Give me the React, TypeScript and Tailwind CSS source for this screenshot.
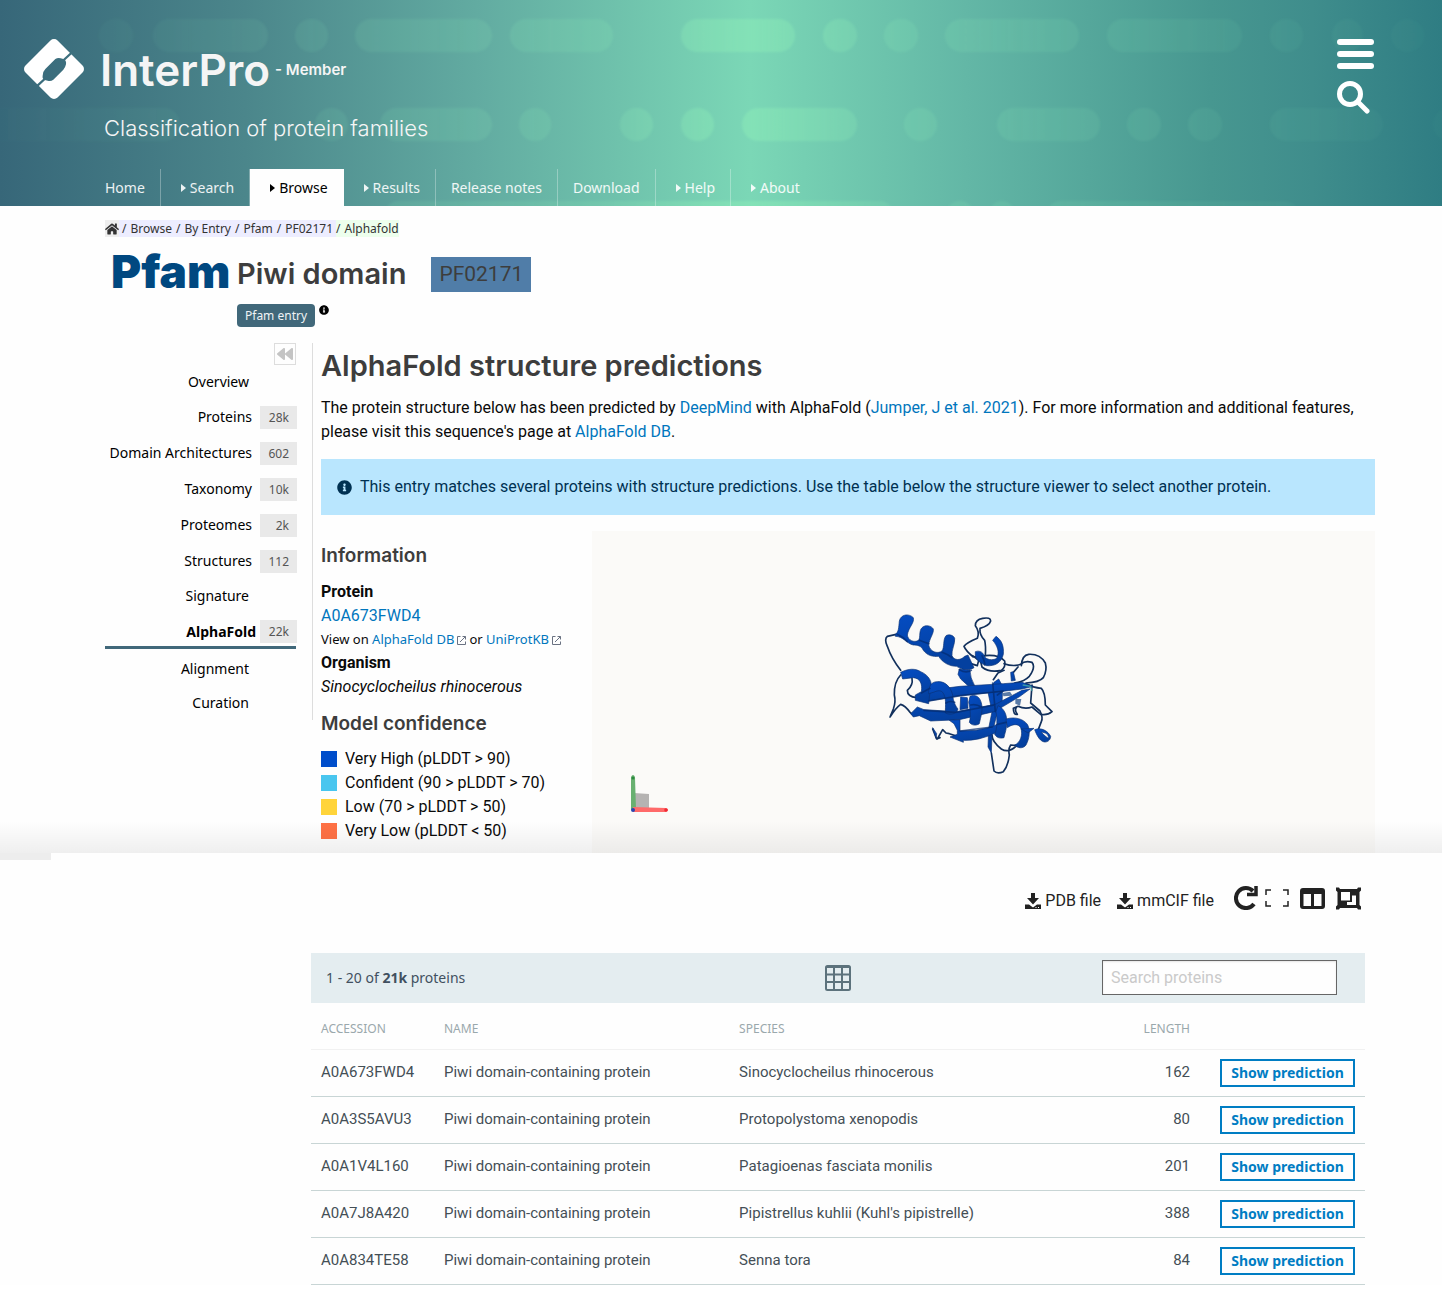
import React from 'react';
import { FaHome, FaInfoCircle, FaBackward } from 'react-icons/fa';

const PLEX = "font-['Roboto',sans-serif]";
const SMALL = "font-['Noto_Sans',sans-serif]";
const HEAD = "font-['Inter',sans-serif]";

const pills: [number, number, number][] = [
  [99, 133, 19], [153, 268, 19], [295, 328, 19], [355, 492, 19], [510, 613, 19],
  [681, 795, 19], [823, 857, 19], [884, 918, 19], [945, 1079, 19], [1107, 1242, 19],
  [1270, 1303, 19], [1332, 1363, 19], [1391, 1424, 19],
  [-20, 180, 108], [315, 348, 108], [380, 492, 108], [519, 551, 108], [620, 653, 108],
  [681, 714, 108], [742, 857, 108], [904, 937, 108], [997, 1100, 108], [1127, 1161, 108],
  [1188, 1222, 108], [1270, 1383, 108], [1433, 1470, 108],
  [383, 895, 201], [945, 975, 201], [988, 1016, 201], [1045, 1300, 201],
];

const navItems = [
  { label: 'Home' },
  { label: 'Search', caret: true },
  { label: 'Browse', caret: true, active: true },
  { label: 'Results', caret: true },
  { label: 'Release notes' },
  { label: 'Download' },
  { label: 'Help', caret: true },
  { label: 'About', caret: true },
];

const menu: { label: string; count?: string; active?: boolean }[] = [
  { label: 'Overview' },
  { label: 'Proteins', count: '28k' },
  { label: 'Domain Architectures', count: '602' },
  { label: 'Taxonomy', count: '10k' },
  { label: 'Proteomes', count: '2k' },
  { label: 'Structures', count: '112' },
  { label: 'Signature' },
  { label: 'AlphaFold', count: '22k', active: true },
  { label: 'Alignment' },
  { label: 'Curation' },
];

const legend = [
  { color: 'bg-[#004ecb]', label: 'Very High (pLDDT > 90)' },
  { color: 'bg-[#49c6ef]', label: 'Confident (90 > pLDDT > 70)' },
  { color: 'bg-[#ffd43a]', label: 'Low (70 > pLDDT > 50)' },
  { color: 'bg-[#ff7145]', label: 'Very Low (pLDDT < 50)' },
];

const proteins = [
  { acc: 'A0A673FWD4', species: 'Sinocyclocheilus rhinocerous', length: 162 },
  { acc: 'A0A3S5AVU3', species: 'Protopolystoma xenopodis', length: 80 },
  { acc: 'A0A1V4L160', species: 'Patagioenas fasciata monilis', length: 201 },
  { acc: 'A0A7J8A420', species: "Pipistrellus kuhlii (Kuhl's pipistrelle)", length: 388 },
  { acc: 'A0A834TE58', species: 'Senna tora', length: 84 },
];

function HeaderPattern() {
  return (
    <svg className="absolute inset-0 h-full w-full" viewBox="0 0 1442 206" preserveAspectRatio="none" aria-hidden="true">
      <defs>
        <linearGradient id="pill" gradientUnits="userSpaceOnUse" x1="0" x2="1442" y1="0" y2="0">
          <stop offset="0" stopColor="#8ff0b8" stopOpacity="0.01" />
          <stop offset="0.25" stopColor="#8ff0b8" stopOpacity="0.100" />
          <stop offset="0.42" stopColor="#8ff0b8" stopOpacity="0.150" />
          <stop offset="0.52" stopColor="#8ff0b8" stopOpacity="0.42" />
          <stop offset="0.62" stopColor="#8ff0b8" stopOpacity="0.150" />
          <stop offset="0.75" stopColor="#8ff0b8" stopOpacity="0.100" />
          <stop offset="1" stopColor="#8ff0b8" stopOpacity="0.02" />
        </linearGradient>
        <filter id="soft" x="-5%" y="-5%" width="110%" height="110%">
          <feGaussianBlur stdDeviation="0.800" />
        </filter>
      </defs>
      <g fill="url(#pill)" filter="url(#soft)">
        {pills.map(([a, b, y]) => (
          <rect key={`${a}-${y}`} x={a} y={y} width={b - a} height="33" rx="16.5" />
        ))}
      </g>
    </svg>
  );
}

function Logo() {
  return (
    <svg className="size-[60px] shrink-0" viewBox="72 116 180 180" aria-hidden="true">
      <defs>
        <mask id="cut">
          <rect x="72" y="116" width="180" height="180" fill="#fff" />
          <path d="M166 176Q174 171 182 174L190 176Q200 180 198 192Q196 202 190 208L160 238Q152 244 143 241L134 239Q126 235 128 226Q128 214 136 206Z" fill="#000" />
          <path d="M188 182L214 158M134 236L110 258" stroke="#000" strokeWidth="7" />
        </mask>
      </defs>
      <g mask="url(#cut)">
        <rect x="94" y="138" width="136" height="136" rx="15" transform="rotate(45 162 206)" fill="#fff" />
      </g>
    </svg>
  );
}

function Caret() {
  return (
    <svg className="h-2 w-[5px]" viewBox="0 0 5 8" fill="currentColor" aria-hidden="true">
      <path d="M0 0L5 4L0 8Z" />
    </svg>
  );
}

function ExternalIcon() {
  return (
    <svg className="mx-[3px] inline size-[9px] text-gray-500" viewBox="0 0 9 9" fill="none" stroke="currentColor" aria-hidden="true">
      <path d="M3.500 .5H.5V8.500H8.500V5.500M5.500 .5H8.500V3.500M8.500 .5L3 6" />
    </svg>
  );
}

function DownloadIcon() {
  return (
    <svg className="size-4" viewBox="0 0 16 16" fill="currentColor" aria-hidden="true">
      <path d="M6 0H10V5H14L8 11.500L2 5H6Z" />
      <path fillRule="evenodd" d="M0 11.500H4L8 14.500L12 11.500H16V16H0ZM10.500 14V15H11.500V14ZM13 14V15H14V14Z" />
    </svg>
  );
}

function Protein() {
  return (
    <svg className="h-[200px] w-[247px]" viewBox="0 0 741 600" role="img" aria-label="Predicted structure">
      <defs>
        <linearGradient id="rib" x1="0" x2="0.300" y1="0" y2="1">
          <stop offset="0" stopColor="#044cc2" />
          <stop offset="1" stopColor="#04409f" />
        </linearGradient>
      </defs>
      <g fill="none" stroke="#12305c" strokeWidth="5" strokeLinecap="round" strokeLinejoin="round">
        <path d="M118 116L82 124Q72 132 82 154Q94 190 122 226" />
        <path d="M122 240Q102 260 103 300Q108 320 100 342L90 366Q108 338 122 328Q136 332 150 352L162 362" />
        <path d="M156 250Q160 270 142 286Q142 306 170 308" />
        <path d="M330 205L352 212L356 196L338 182M312 154Q322 142 352 130Q360 110 346 92Q346 74 368 70Q392 66 392 78Q388 92 360 100Q358 120 374 136Q378 152 376 182L340 186Q318 168 312 154" />
        <path d="M376 182Q416 178 434 198Q438 216 424 226Q388 234 366 216L362 200" />
        <path d="M432 206Q460 216 482 208Q494 196 516 202Q528 216 508 244Q492 260 464 264" />
        <path d="M484 212Q486 180 506 178Q540 176 556 204Q562 226 550 248Q538 262 498 264" />
        <path d="M460 232L474 216M400 254L414 234L432 226" />
        <path d="M498 266Q520 278 544 280Q556 292 556 330L576 350Q562 362 542 358L516 336Q496 344 474 334L460 340Q460 360 472 358Q462 346 470 336" />
        <path d="M516 270L512 324L540 348Q550 368 544 380L534 406" />
        <path d="M396 420Q396 440 424 462Q446 476 470 452L452 450Q444 462 448 480Q444 514 430 530Q412 538 402 528L394 474" />
        <path d="M232 432L248 404L258 414L268 416L292 424M218 402L230 432L240 428" />
      </g>
      <g fill="url(#rib)" stroke="#0a3275" strokeWidth="2" strokeLinejoin="round">
        <path d="M106 118C116 112 116 98 118 78C122 58 146 54 160 68C164 84 146 96 142 120C144 136 162 144 176 136C182 126 176 108 186 98C196 88 214 92 220 102C222 116 208 130 206 150C210 170 232 178 246 168C254 156 248 134 258 122C268 116 282 122 284 130C286 146 274 164 276 182C282 196 300 198 314 184L324 180L342 218C320 232 300 220 290 214C270 214 248 204 236 184C220 186 202 182 190 166C184 152 172 150 160 150C140 146 130 124 106 124Z" />
        <path d="M298 222L330 226Q330 248 344 272L324 272L302 252L294 238Z" />
        <path d="M346 170C362 164 372 176 374 186C386 198 404 194 410 190C420 172 412 152 398 136L408 124C426 136 432 154 430 178C424 204 404 214 380 212C362 206 350 196 346 184Z" />
        <path d="M452 232L460 230L466 256L454 258Z" />
        <path d="M384 292L402 262L416 252L428 274L426 330L410 360L396 418L394 474L384 456L386 400L396 350Z" />
        <path d="M302 306L322 308L324 340L300 344Z" />
        <path d="M204 286L300 274L430 266L486 262L520 274L486 282L420 290L300 302L206 318Z" />
        <path d="M152 356L172 336L192 344L288 350L406 328L486 286L510 282L480 304L430 334L402 350L298 374L212 378L178 362L160 366Z" />
        <path d="M268 376L300 374L300 408L348 406L396 396L422 382Q420 404 406 414Q356 438 310 436V442L270 426L292 418V406L282 386Z" />
        <path d="M122 232C146 220 166 220 182 230C206 240 220 262 212 286C208 298 208 312 206 326L166 316V300L184 290C188 266 180 250 160 248L128 252Z" />
        <path d="M206 296C206 276 212 260 232 260C256 258 272 276 278 300C280 320 286 332 294 342C290 356 272 362 256 354C256 332 260 308 248 292C240 284 230 288 220 292Z" />
        <path d="M330 304C346 296 360 306 364 324C370 344 362 366 358 386C346 394 334 390 328 382C334 360 330 340 326 322Z" />
        <path d="M414 332C432 340 440 358 440 376C442 398 434 416 432 428C418 432 408 426 404 418C412 400 412 372 408 350Z" />
        <path d="M438 372C466 364 490 372 502 388C512 404 508 432 498 450C490 462 472 460 464 450C480 444 490 420 482 398C474 384 456 388 442 398Z" />
        <path d="M484 402L522 400L504 414Z" />
        <path fillRule="evenodd" d="M524 404C544 396 564 408 572 424C572 436 560 444 550 440C538 436 530 420 524 404ZM544 412C552 420 560 428 566 430C566 418 556 412 544 412Z" />
        <path d="M218 398L230 416L228 430Z" />
      </g>
      <g fill="none" stroke="#032b70" strokeWidth="5" strokeLinecap="round" opacity="0.700">
        <path d="M112 118Q130 126 142 140M178 136Q192 142 206 146M246 172Q264 178 276 188M298 224Q318 236 334 226" />
        <path d="M184 294L210 280M258 324Q270 316 284 322M332 330Q348 326 364 336M412 388L438 382M206 318L302 302L430 288" />
        <path d="M192 346L288 352L404 330M300 408L396 396M398 264L406 350M412 300L426 290M366 182Q376 204 374 210" />
      </g>
      <path d="M428 294L450 290L458 302L430 304ZM466 312L484 312L480 332L466 326Z" fill="#5b7ba6" />
      <path d="M488 270L512 274L516 288" fill="none" stroke="#3f9aa3" strokeWidth="4" />
    </svg>
  );
}

function Axes() {
  return (
    <svg className="absolute bottom-9 left-9 h-12 w-12" viewBox="0 0 48 48" aria-hidden="true">
      <path d="M6 24L21 25V41H6Z" fill="#b5b3b2" />
      <path d="M3 8Q5 4 7 8L8 41H3Z" fill="#68b070" />
      <circle cx="5" cy="9" r="1.500" fill="#2e8a40" />
      <path d="M5 38L38 39Q42 41 38 43L5 43Z" fill="#ff6a6a" />
      <circle cx="38" cy="41" r="1.800" fill="#f02a35" />
      <circle cx="5" cy="41" r="2" fill="#2b45b0" />
    </svg>
  );
}

function Link({ children }: { children: React.ReactNode }) {
  return <a href="#" className="text-[#0076bd]">{children}</a>;
}

export default function App() {
  return (
    <div className={`${PLEX} overflow-hidden bg-[#fefefe] text-base leading-6 text-[#0a0a0a]`}>
      <header className="relative bg-[linear-gradient(90deg,#376779_0%,#4b868b_17%,#62aba1_33%,#7bd7b6_52%,#63b7a6_67%,#479790_84%,#3f8d8c_91%,#2f7d83_100%)]">
        <HeaderPattern />
        <div className="relative flex justify-between pt-[39px] pr-[68px] pl-6">
          <div className="flex gap-4">
            <Logo />
            <div className={`${HEAD} h-[130px] text-[#f5f5f5]`}>
              <div className="flex items-center gap-[5px]">
                <h1 className="text-[44px] leading-[62px] font-semibold">InterPro</h1>
                <span className="text-[15px] leading-5 font-semibold">- Member</span>
              </div>
              <p className="mt-[11px] pl-1 text-[22px] leading-8 font-light">Classification of protein families</p>
            </div>
          </div>
          <div className="flex flex-col items-start gap-3 text-white">
            <button aria-label="Menu" className="flex h-[30px] w-[37px] flex-col justify-between">
              <span className="h-[6px] w-full rounded-sm bg-white" />
              <span className="h-[6px] w-full rounded-sm bg-white" />
              <span className="h-[6px] w-full rounded-sm bg-white" />
            </button>
            <button aria-label="Search">
              <svg className="size-[33px]" viewBox="0 0 33 33" fill="none" stroke="currentColor" strokeLinecap="round">
                <circle cx="13" cy="13" r="10.500" strokeWidth="5" />
                <path d="M21 21L30 30" strokeWidth="5" />
              </svg>
            </button>
          </div>
        </div>
        <nav className={`${SMALL} relative flex pl-[90px] text-sm text-white/90`}>
          {navItems.map((n, i) => (
            <a
              key={n.label}
              href="#"
              className={`flex h-[37px] items-center gap-1 pr-[15px] ${n.caret ? 'pl-5' : 'pl-[15px]'} ${i < navItems.length - 1 ? 'border-r border-white/30' : ''} ${n.active ? 'bg-[#fefefe] text-black' : ''}`}
            >
              {n.caret && <Caret />}
              {n.label}
            </a>
          ))}
        </nav>
      </header>

      <section className="relative pr-[67px] pb-[11px] pl-[105px]">
        <div className={`${SMALL} flex pt-3.5 text-xs leading-[17px] text-[#333]`}>
          <a href="#" aria-label="Home" className="flex items-center bg-[#eeeeee]"><FaHome className="size-3.5" /></a>
          <span className="flex gap-1 bg-[#ededff] px-[3px]">/ <a href="#">Browse</a> / <a href="#">By Entry</a> / <a href="#">Pfam</a> / <a href="#">PF02171</a></span>
          <span className="flex gap-1 bg-[#edffed]">/ <a href="#">Alphafold</a></span>
        </div>
        <div className="flex pt-3.5 pl-1.5">
          <div className={`${HEAD} w-[126px] text-[46px] leading-10 font-black text-[#004880]`}>Pfam</div>
          <div>
            <div className="flex items-center gap-[25px] pt-[5px]">
              <h2 className={`${HEAD} text-[29px] leading-9 font-semibold text-[#3d3d3d]`}>Piwi domain</h2>
              <span className="bg-[#507da8] px-2 text-[21px] leading-[35px] text-[#3d3d3d]">PF02171</span>
            </div>
            <div className="flex gap-1 pt-3">
              <span className={`${SMALL} rounded-sm bg-[#41687a] px-2 text-xs leading-[23px] text-[#f0f3f5]`}>Pfam entry</span>
              <FaInfoCircle className="mt-px size-[10px] text-black" />
            </div>
          </div>
        </div>

        <div className="flex pt-4">
          <aside className={`${SMALL} w-[208px] shrink-0 self-start border-r border-[#ddd] pr-4 text-sm leading-5`}>
            <div className="flex justify-end">
              <button aria-label="Collapse menu" className="flex size-[22px] items-center justify-center border border-[#ddd] text-[#c4c4c4]">
                <FaBackward className="size-4" />
              </button>
            </div>
            <ul>
              {menu.map((m) => (
                <li key={m.label}>
                  <a
                    href="#"
                    className={`flex items-center justify-end text-black ${m.count ? 'h-9' : 'h-[34px] pr-[47px]'} ${m.active ? 'mb-[3px] gap-1 border-b-[3px] border-[#41687a] pt-1 font-bold' : 'gap-2'}`}
                  >
                    <span>{m.label}</span>
                    {m.count && <span className="-mr-px w-[37px] bg-[#e9e9e9] pr-2 text-right text-xs leading-[23px] font-normal text-[#555]">{m.count}</span>}
                  </a>
                </li>
              ))}
            </ul>
          </aside>

          <main className="min-w-0 flex-1 pl-2">
            <h2 className={`${HEAD} mb-[7px] text-[29px] leading-[46px] font-semibold text-[#3d3d3d]`}>AlphaFold structure predictions</h2>
            <p>
              The protein structure below has been predicted by <Link>DeepMind</Link> with AlphaFold (<Link>Jumper, J et al. 2021</Link>). For more information and additional features, please visit this sequence's page at <Link>AlphaFold DB</Link>.
            </p>
            <div className="mt-[15px] flex items-center gap-2 bg-[#b9e6fe] p-4 text-[#003152]">
              <FaInfoCircle className="size-[15px]" />
              <span>This entry matches several proteins with structure predictions. Use the table below the structure viewer to select another protein.</span>
            </div>
            <div className="mt-4 -mb-[11px] flex">
              <div className="w-[271px] shrink-0 pt-px">
                <h3 className={`${HEAD} my-2.5 text-[19px] leading-7 font-semibold text-[#3d3d3d]`}>Information</h3>
                <div className="font-bold">Protein</div>
                <div><Link>A0A673FWD4</Link></div>
                <div className={`${SMALL} text-[13px] leading-[23px]`}>
                  View on <Link>AlphaFold DB</Link><ExternalIcon />or <Link>UniProtKB</Link><ExternalIcon />
                </div>
                <div className="font-bold">Organism</div>
                <div className="italic">Sinocyclocheilus rhinocerous</div>
                <h3 className={`${HEAD} mt-[11px] mb-[9px] text-[19px] leading-7 font-semibold text-[#3d3d3d]`}>Model confidence</h3>
                <ul>
                  {legend.map((l) => (
                    <li key={l.label} className="flex items-center gap-2">
                      <span className={`size-4 ${l.color}`} />
                      {l.label}
                    </li>
                  ))}
                </ul>
              </div>
              <div className="relative flex min-h-[322px] flex-1 justify-center bg-[#fbfaf8] pt-16">
                <Protein />
                <Axes />
              </div>
            </div>
          </main>
        </div>
        <div className="pointer-events-none absolute inset-x-0 bottom-0 h-8 bg-linear-to-b from-transparent to-black/6" />
        <div className="absolute top-full left-0 h-[7px] w-[51px] bg-[#ededed]" />
      </section>

      <section className="pt-[30px] pr-[77px] pl-[311px]">
        <div className="flex items-center justify-end gap-4 pr-1 text-[#222]">
          <a href="#" className="flex items-center gap-1 pt-1.5"><DownloadIcon />PDB file</a>
          <a href="#" className="mr-1 flex items-center gap-1 pt-1.5"><DownloadIcon />mmCIF file</a>
          <div className="flex items-center">
            <button aria-label="Reset view" className="mr-[7px]">
              <svg className="size-6" viewBox="0 0 24 24" fill="none" stroke="currentColor" strokeWidth="4">
                <path d="M20 18A10 10 0 1 1 19 5" />
                <path d="M22 0V8.500H13" strokeWidth="3.500" />
              </svg>
            </button>
            <button aria-label="Full screen" className="mr-[11px]">
              <svg className="size-6" viewBox="0 0 24 24" fill="none" stroke="currentColor" strokeWidth="1.500">
                <path d="M1 9V4H6M18 4H23V9M23 15V20H18M6 20H1V15" />
              </svg>
            </button>
            <button aria-label="Split view" className="mr-[11px]">
              <svg className="size-[25px]" viewBox="0 0 25 25" fill="currentColor">
                <path fillRule="evenodd" d="M3 2H22Q25 2 25 5V20Q25 23 22 23H3Q0 23 0 20V5Q0 2 3 2ZM3.500 8V20H11V8ZM14 8V20H21.500V8Z" />
              </svg>
            </button>
            <button aria-label="Picture in picture">
              <svg className="size-[25px]" viewBox="0 0 25 25" fill="currentColor">
                <path fillRule="evenodd" d="M0 1.500H3L4 3H21L22 1.500H25V4.500L23.500 6V19L25 20.500V23.500H22L21 22H4L3 23.500H0V20.500L1.500 19V6L0 4.500ZM5 6V14.500H14V6ZM16 9.500V16H11V19H20V9.500Z" />
              </svg>
            </button>
          </div>
        </div>

        <div className={`${SMALL} mt-10 grid grid-cols-[1fr_auto_1fr] items-center bg-[#e4edf0] px-[15px] pt-[7px] pb-2 text-sm text-[#41505f]`}>
          <div>1 - 20 of <b>21k</b> proteins</div>
          <button aria-label="Table view" className="text-[#5c727c]">
            <svg className="size-[26px]" viewBox="0 0 26 26" fill="none" stroke="currentColor" strokeWidth="2">
              <rect x="1" y="1" width="24" height="24" rx="1.500" />
              <path d="M1 2H25M1 9.500H25M1 17H25M9 3V25M17 3V25" />
            </svg>
          </button>
          <input
            type="search"
            aria-label="Search proteins"
            placeholder="Search proteins"
            className={`${PLEX} mr-[13px] h-[35px] w-[235px] justify-self-end border border-[#666] bg-[#fefefe] px-2 text-base shadow-[inset_0_1px_2px_rgba(10,10,10,0.1)] placeholder:text-[#cacaca]`}
          />
        </div>

        <table className="w-full table-fixed border-collapse text-left text-[15px] text-[#444f56]">
          <colgroup>
            <col className="w-[123px]" />
            <col className="w-[28%]" />
            <col />
            <col className="w-[100px]" />
            <col className="w-[165px]" />
          </colgroup>
          <thead>
            <tr className={`${SMALL} h-[46px] border-b border-[#f1f1f1] text-xs text-[#9aa8ac] uppercase`}>
              <th scope="col" className="px-2.5 pt-1.5 font-normal">Accession</th>
              <th scope="col" className="px-2.5 pt-1.5 font-normal">Name</th>
              <th scope="col" className="px-2.5 pt-1.5 font-normal">Species</th>
              <th scope="col" className="px-2.5 pt-1.5 text-right font-normal">Length</th>
              <td />
            </tr>
          </thead>
          <tbody>
            {proteins.map((p) => (
              <tr key={p.acc} className="h-[47px] border-b border-[#c8d5d5]">
                <td className="px-2.5 pb-0.5">{p.acc}</td>
                <td className="px-2.5 pb-0.5">Piwi domain-containing protein</td>
                <td className="px-2.5 pb-0.5">{p.species}</td>
                <td className="px-2.5 pb-0.5 text-right">{p.length}</td>
                <td className="pr-2.5 text-right">
                  <button className={`${SMALL} h-7 w-[135px] border-2 border-[#007dc3] text-center text-sm leading-5 font-bold text-[#007dc3]`}>Show prediction</button>
                </td>
              </tr>
            ))}
          </tbody>
        </table>
      </section>
    </div>
  );
}
